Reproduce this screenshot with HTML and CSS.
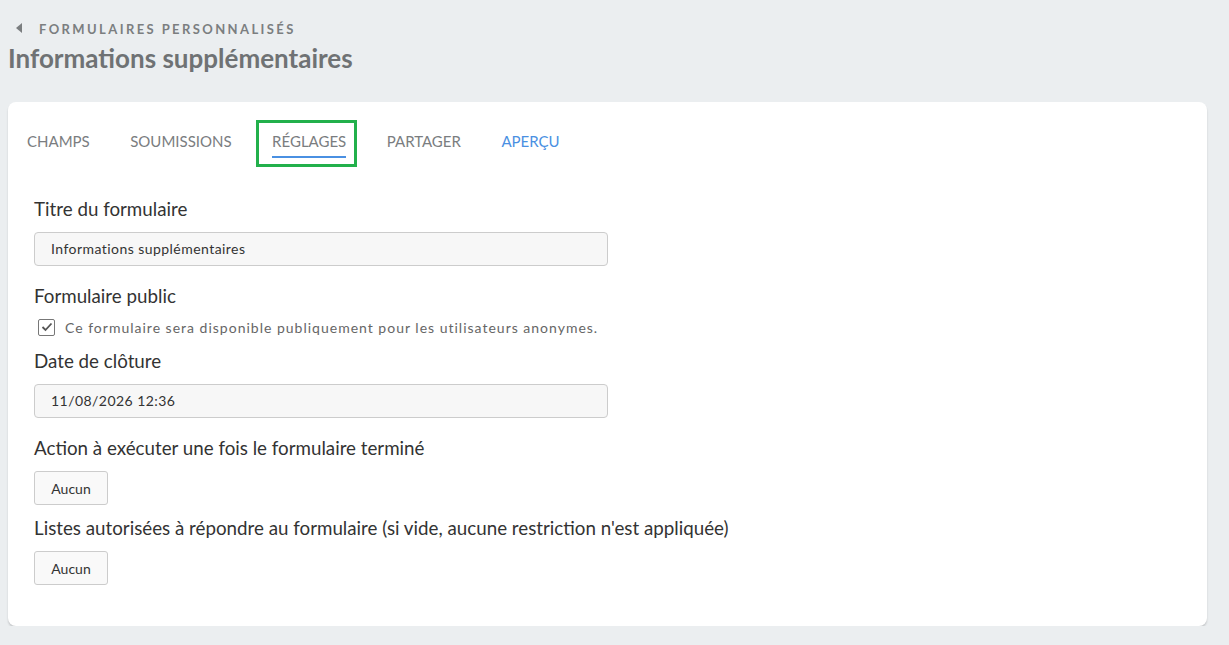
FILE: index.html
```html
<!DOCTYPE html>
<html lang="fr">
<head>
  <meta charset="UTF-8" />
  <meta name="viewport" content="width=device-width, initial-scale=1.0" />
  <title>Informations supplémentaires</title>
  <link rel="stylesheet" href="styles.css">
</head>
<body>
  <div class="header">
    <a class="crumb" href="#">
      <svg class="crumb-arrow" width="7" height="10" viewBox="0 0 7 10"><path d="M6 0 L0 5 L6 10 Z" fill="#7b7e80"/></svg>
      Formulaires personnalisés
    </a>
    <h1>Informations supplémentaires</h1>
  </div>

  <div class="card">
    <div class="tabs">
      <a class="tab" href="#">Champs</a>
      <a class="tab" href="#">Soumissions</a>
      <a class="tab active highlight" href="#">Réglages</a>
      <a class="tab" href="#">Partager</a>
      <a class="tab link" href="#">Aperçu</a>
    </div>

    <div class="form">
      <div class="field">
        <label class="label">Titre du formulaire</label>
        <div class="input">Informations supplémentaires</div>
      </div>

      <div class="field field-check">
        <label class="label">Formulaire public</label>
        <div class="check-row">
          <span class="checkbox">
            <svg width="12" height="10" viewBox="0 0 12 10"><path d="M1.5 5 L4.5 8 L10.5 1.5" fill="none" stroke="#555" stroke-width="1.8"/></svg>
          </span>
          Ce formulaire sera disponible publiquement pour les utilisateurs anonymes.
        </div>
      </div>

      <div class="field">
        <label class="label">Date de clôture</label>
        <div class="input">11/08/2026 12:36</div>
      </div>

      <div class="field field-btn">
        <label class="label">Action à exécuter une fois le formulaire terminé</label>
        <button class="btn">Aucun</button>
      </div>

      <div class="field field-last">
        <label class="label">Listes autorisées à répondre au formulaire (si vide, aucune restriction n'est appliquée)</label>
        <button class="btn">Aucun</button>
      </div>
    </div>
  </div>
</body>
</html>
```

FILE: styles.css
```css
html, body {
  margin: 0;
  background: #ebeef0;
  font-family: Lato, "Open Sans", sans-serif;
  color: #333;
}
body {
  padding: 0 22px 0 8px;
}
.header {
  padding-top: 19px;
}
.crumb {
  display: flex;
  align-items: center;
  margin-left: 8px;
  font-size: 13px;
  font-weight: bold;
  letter-spacing: 2.4px;
  text-transform: uppercase;
  color: #7b7e80;
  text-decoration: none;
  height: 20px;
}
.crumb-arrow {
  margin-right: 16px;
  margin-top: -2px;
}
h1 {
  margin: 2px 0 0;
  font-size: 26px;
  line-height: 34px;
  font-weight: bold;
  color: #6f7274;
}
.card {
  margin-top: 27px;
  background: #fff;
  border-radius: 8px;
  box-shadow: 0 2px 2px rgba(0, 0, 0, 0.16);
  padding-bottom: 41px;
}
.tabs {
  display: flex;
  gap: 40.5px;
  padding: 29px 0 0 19px;
}
.tab {
  position: relative;
  font-size: 15px;
  line-height: 20px;
  text-transform: uppercase;
  color: #7a7d80;
  text-decoration: none;
  padding-bottom: 5px;
  border-bottom: 2px solid transparent;
}
.tab.active {
  border-bottom-color: #4a90e2;
}
.tab.link {
  color: #4a90e2;
}
.highlight::after {
  content: "";
  position: absolute;
  left: -16px;
  right: -11px;
  top: -11px;
  bottom: -11px;
  border: 3px solid #22b04b;
}
.form {
  padding: 39px 0 0 26px;
}
.label {
  display: block;
  font-size: 18.75px;
  line-height: 24px;
  color: #333;
  margin-bottom: 11px;
}
.field {
  margin-bottom: 18px;
}
.input {
  box-sizing: border-box;
  width: 574px;
  height: 34px;
  padding: 0 16px;
  line-height: 32px;
  font-size: 14px;
  letter-spacing: 0.45px;
  color: #333;
  background: #f7f7f7;
  border: 1px solid #ccc;
  border-radius: 4px;
}
.field-check {
  margin-bottom: 12px;
}
.field-check .label {
  margin-bottom: 9px;
}
.check-row {
  display: flex;
  align-items: center;
  height: 20px;
  font-size: 14px;
  letter-spacing: 1px;
  color: #666;
}
.checkbox {
  display: flex;
  align-items: center;
  justify-content: center;
  box-sizing: border-box;
  width: 17px;
  height: 17px;
  margin: 0 10px 0 4px;
  border: 1px solid #777;
  border-radius: 2px;
}
.field-btn {
  margin-bottom: 11px;
}
.field-last {
  margin-bottom: 0;
}
.btn {
  display: block;
  box-sizing: border-box;
  width: 74px;
  height: 34px;
  font-family: Lato, "Open Sans", sans-serif;
  font-size: 14px;
  color: #333;
  background: #f9f9f9;
  border: 1px solid #ccc;
  border-radius: 3px;
}
```
